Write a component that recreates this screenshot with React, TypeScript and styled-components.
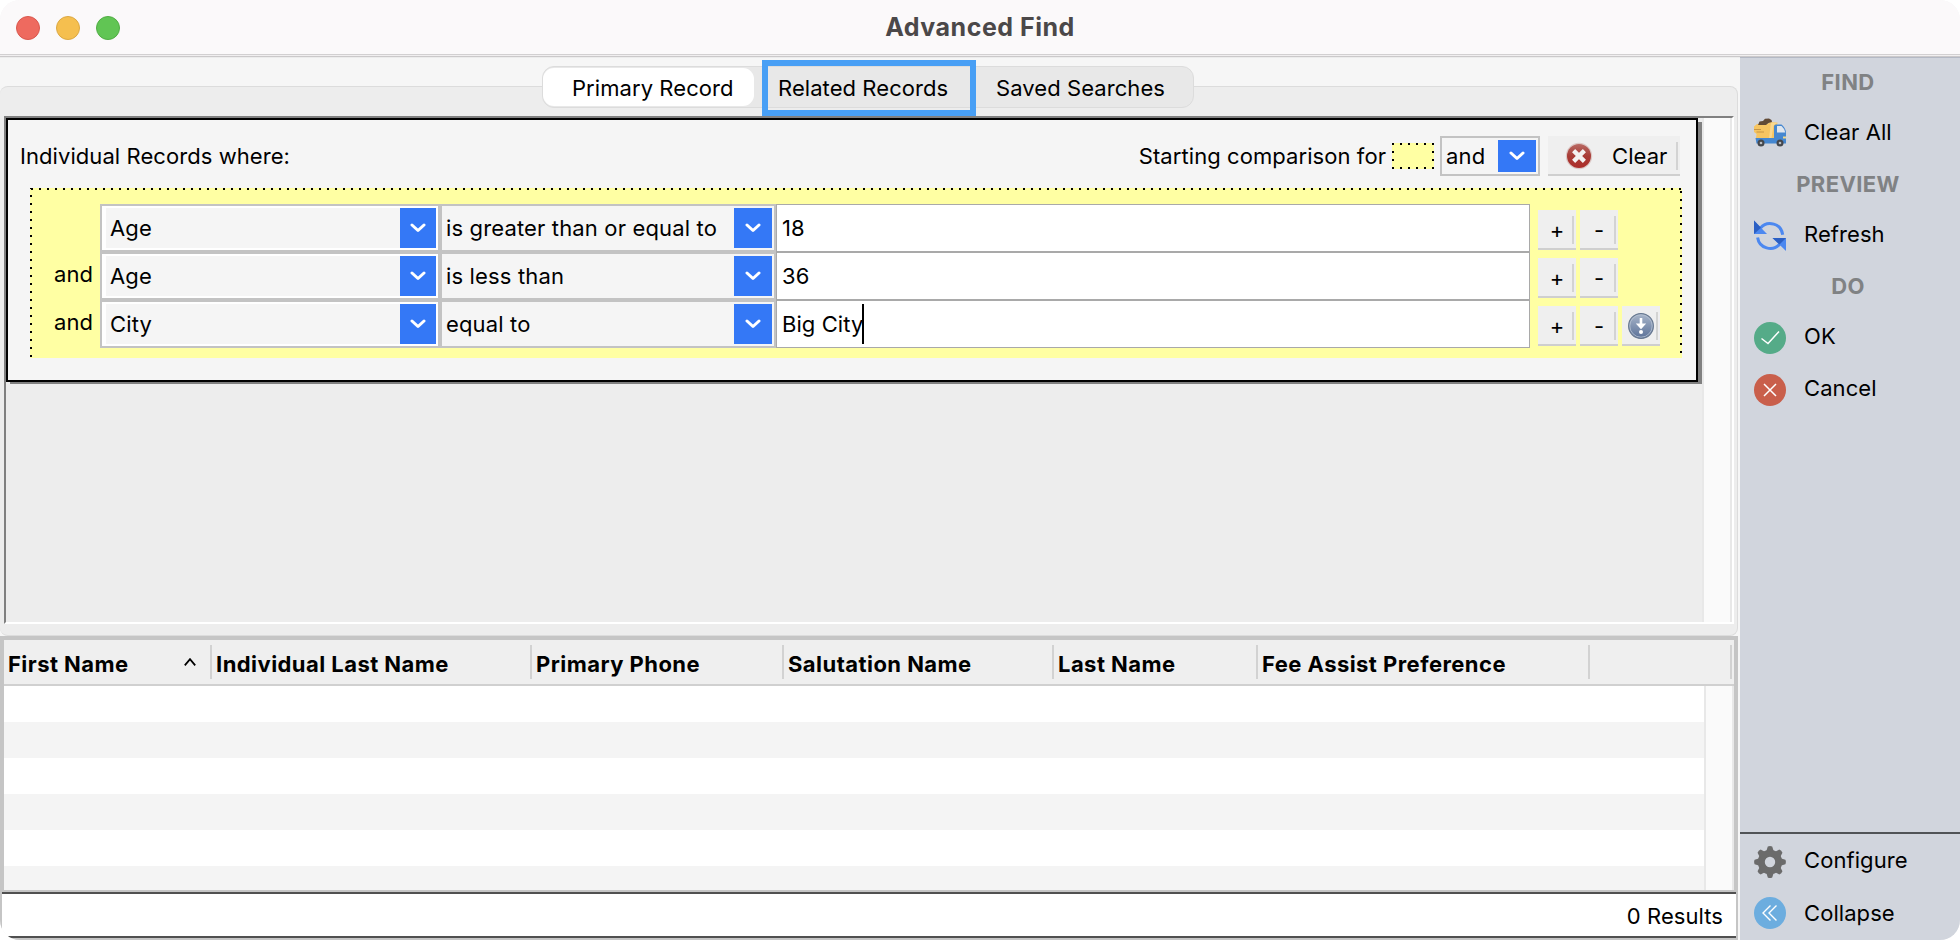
import React from "react";
import styled, { createGlobalStyle } from "styled-components";

const GlobalStyle = createGlobalStyle`
  * { box-sizing: border-box; }
  body {
    margin: 0;
    background: #fff;
    font-family: Inter, "Liberation Sans", sans-serif;
    font-size: 22px;
    line-height: 26px;
    letter-spacing: 0.07px;
    color: #000;
    white-space: nowrap;
  }
`;

const Window = styled.div`
  width: 1960px;
  height: 940px;
  display: flex;
  flex-direction: column;
  border-radius: 20px;
  overflow: hidden;
  background: #f6f6f6;
`;

const TitleBar = styled.header`
  height: 58px;
  flex: none;
  display: grid;
  grid-template-columns: 1fr auto 1fr;
  align-items: center;
  padding: 0 16px 4px;
  background: linear-gradient(#fbf9fa 54px, #d2d0d1 54px 55px, #f1eff0 55px 56px, #cbc9ca 56px 57px, #ececec 57px);
`;

const TrafficLights = styled.div`
  display: flex;
  gap: 16px;
  padding-top: 2px;
`;

const Light = styled.span<{ $fill: string; $edge: string }>`
  width: 24px;
  height: 24px;
  border-radius: 50%;
  border: 1px solid ${(p) => p.$edge};
  background: ${(p) => p.$fill};
`;

const Title = styled.h1`
  margin: 0;
  font-size: 25px;
  line-height: 30px;
  font-weight: 700;
  letter-spacing: 0.5px;
  color: #4b4849;
`;

const Body = styled.div`
  flex: 1;
  min-height: 0;
  display: flex;
  margin-top: -1px;
`;

const Main = styled.main`
  width: 1740px;
  flex: none;
  display: flex;
  flex-direction: column;
`;

const TabPanel = styled.section`
  width: 1738px;
  height: 550px;
  margin-top: 29px;
  padding: 0 3px 0 4px;
  border: 1px solid #dcdcdc;
  border-left-width: 0;
  border-radius: 8px;
  background: #ededed;
`;

const Tabs = styled.nav`
  position: relative;
  width: 652px;
  height: 42px;
  margin: -21px 0 8px 538px;
  display: flex;
  border: 1px solid #dcdcdc;
  border-radius: 12px;
  background: #e8e8e8;
`;

const Tab = styled.button<{ $width: number; $indent: number; $active?: boolean }>`
  width: ${(p) => p.$width}px;
  height: 38px;
  margin-top: 1px;
  padding: 2px 0 0 ${(p) => p.$indent}px;
  border: 0;
  border-radius: 11px;
  background: ${(p) => (p.$active ? "#fff" : "transparent")};
  font: inherit;
  letter-spacing: inherit;
  text-align: left;
  color: inherit;
`;

const FocusRing = styled.span`
  position: absolute;
  left: 219px;
  top: -7px;
  width: 214px;
  height: 56px;
  border: 6px solid #489ff5;
`;

const Viewport = styled.div`
  display: flex;
  width: 1730px;
  height: 508px;
  border-top: 2px solid #808080;
  border-left: 2px solid #808080;
  border-bottom: 2px solid #fff;
  border-right: 2px solid #fff;
`;

const Canvas = styled.div`
  width: 1696px;
  flex: none;
`;

const ScrollTrack = styled.div`
  flex: 1;
  border-left: 2px solid #e8e8e8;
  border-right: 2px solid #e8e8e8;
  background: #fafafa;
`;

const Criteria = styled.div`
  width: 1692px;
  height: 264px;
  border: 2px solid #000;
  background: #f5f5f5;
  box-shadow: 4px 2px 0 #808080;
  clip-path: polygon(0 0, 1692px 0, 1692px 4px, 1696px 4px, 1696px 266px, 4px 266px, 4px 264px, 0 264px);
`;

const CriteriaHeader = styled.div`
  height: 68px;
  display: flex;
  align-items: center;
  padding: 4px 16px 0 12px;
`;

const Spacer = styled.span`
  flex: 1;
`;

const Swatch = styled.span`
  width: 42px;
  height: 26px;
  margin: 0 6px 0 6px;
  background:
    linear-gradient(90deg, #000 2px, transparent 2px) 0 0 / 8px 2px repeat-x,
    linear-gradient(90deg, #000 2px, transparent 2px) 0 100% / 8px 2px repeat-x,
    linear-gradient(#000 2px, transparent 2px) 0 0 / 2px 8px repeat-y,
    linear-gradient(#000 2px, transparent 2px) 100% 0 / 2px 8px repeat-y,
    #ffffa3;
`;

const Select = styled.div<{ $width: number; $height: number; $indent: number; $inset?: boolean }>`
  width: ${(p) => p.$width}px;
  height: ${(p) => p.$height}px;
  flex: none;
  display: flex;
  align-items: center;
  justify-content: space-between;
  padding: 0 2px 0 ${(p) => p.$indent}px;
  border: 2px solid #c3c3c3;
  background: #f5f5f5;
  letter-spacing: 0.15px;
  box-shadow: ${(p) => (p.$inset ? "inset 0 0 0 2px #fff, inset 4px 0 0 #fff" : "none")};
`;

const Arrow = styled.span<{ $width: number; $height: number }>`
  width: ${(p) => p.$width}px;
  height: ${(p) => p.$height}px;
  display: flex;
  align-items: center;
  justify-content: center;
  padding-right: 1px;
  background: #3478f6;
`;

const PushButton = styled.button<{ $width: number }>`
  position: relative;
  width: ${(p) => p.$width}px;
  height: 40px;
  display: flex;
  align-items: center;
  justify-content: center;
  padding: 2px 0 0;
  border: 0;
  border-bottom: 2px solid #cfcfcf;
  background: #efefef;
  font: inherit;
  letter-spacing: inherit;
  color: inherit;
  &::after {
    content: "";
    position: absolute;
    right: 2px;
    top: 6px;
    width: 2px;
    height: 28px;
    background: #d3d3d3;
  }
`;

const ClearButton = styled(PushButton)`
  margin-left: 8px;
  justify-content: flex-start;
  gap: 19px;
  padding: 2px 0 0 17px;
`;

const Group = styled.div`
  width: 1652px;
  height: 170px;
  margin-left: 22px;
  padding-top: 16px;
  background:
    linear-gradient(90deg, #000 2px, transparent 2px) 1px 0 / 8px 2px repeat-x,
    linear-gradient(#000 2px, transparent 2px) 0 7px / 2px 8px repeat-y,
    linear-gradient(#000 2px, transparent 2px) 100% 3px / 2px 8px repeat-y,
    #ffffa3;
`;

const Rule = styled.div`
  height: 48px;
  display: flex;
`;

const Joiner = styled.span`
  width: 70px;
  padding: 9px 7px 0 0;
  text-align: right;
`;

const ValueField = styled.div`
  width: 754px;
  height: 48px;
  display: flex;
  align-items: center;
  padding: 0 0 0 5px;
  border: 1px solid #a9a9a9;
  background: #fff;
`;

const Caret = styled.span`
  width: 2px;
  height: 40px;
  margin-left: -1px;
  background: #000;
`;

const RuleActions = styled.div`
  display: flex;
  gap: 4px;
  padding: 6px 0 0 8px;
`;

const Results = styled.section`
  width: 1738px;
  height: 256px;
  border: 4px solid #c5c5c5;
  border-bottom-width: 2px;
`;

const Columns = styled.div`
  height: 46px;
  display: flex;
  align-items: center;
  border-bottom: 2px solid #d0d0d0;
  background: #efefef;
`;

const Column = styled.div<{ $width: number }>`
  width: ${(p) => p.$width}px;
  height: 34px;
  display: flex;
  align-items: center;
  justify-content: space-between;
  padding: 4px 14px 0 4px;
  border-right: 2px solid #d2d2d2;
  font-weight: 700;
  letter-spacing: 0.45px;
  & > svg { margin-bottom: 4px; }
`;

const Grid = styled.div`
  height: 204px;
  display: flex;
`;

const Rows = styled.div`
  width: 1700px;
  background: repeating-linear-gradient(#fff 0 36px, #f4f4f4 36px 72px);
`;

const Footer = styled.footer`
  height: 48px;
  display: flex;
  align-items: center;
  justify-content: flex-end;
  width: 1738px;
  padding: 2px 13px 0 0;
  border-left: 2px solid #c5c5c5;
  border-right: 2px solid #c5c5c5;
  border-bottom: 2px solid #c5c5c5;
  background: linear-gradient(#505050 2px, #fff 2px calc(100% - 2px), #505050 calc(100% - 2px));
`;

const Sidebar = styled.aside`
  flex: 1;
  display: flex;
  flex-direction: column;
  border-top: 1px solid #b4b9c4;
  background: #d1d5dd;
`;

const Heading = styled.h2`
  height: 50px;
  margin: 0;
  padding-right: 4px;
  font-size: 22px;
  line-height: 49px;
  font-weight: 700;
  letter-spacing: 0.4px;
  text-align: center;
  color: #808284;
`;

const Action = styled.button<{ $shift?: number }>`
  height: 52px;
  display: flex;
  align-items: center;
  gap: 18px;
  padding: 0 0 4px 14px;
  border: 0;
  background: none;
  font: inherit;
  letter-spacing: inherit;
  color: inherit;
  & > svg { margin-top: ${(p) => p.$shift ?? 4}px; flex: none; }
`;

const SidebarFooter = styled.div`
  display: flex;
  flex-direction: column;
  margin-top: auto;
  height: 108px;
  padding-top: 2px;
  border-top: 2px solid #505356;
  gap: 2px;
`;

const Chevron = () => (
  <svg width="16" height="10" viewBox="0 0 16 10" fill="none">
    <path d="M2 2l6 5.5L14 2" stroke="#fff" strokeWidth="3" strokeLinecap="round" strokeLinejoin="round" />
  </svg>
);

const SortUp = () => (
  <svg width="12" height="8" viewBox="0 0 12 8" fill="none">
    <path d="M0.8 7.4L6 1.2l5.2 6.2" stroke="#000" strokeWidth="1.8" />
  </svg>
);

const ClearIcon = () => (
  <svg width="28" height="28" viewBox="0 0 28 28">
    <defs>
      <linearGradient id="clearRed" x1="0" y1="0" x2="0" y2="1">
        <stop offset="0" stopColor="#b96a64" />
        <stop offset="0.5" stopColor="#a83c36" />
        <stop offset="1" stopColor="#ad2c29" />
      </linearGradient>
    </defs>
    <circle cx="14" cy="14" r="13.2" fill="#dcc9c7" />
    <circle cx="14" cy="14" r="12" fill="url(#clearRed)" />
    <path d="M8.6 8.6l10.8 10.8M19.4 8.6L8.600 19.400" stroke="#f4f1f0" strokeWidth="4.4" />
  </svg>
);

const DownIcon = () => (
  <svg width="26" height="26" viewBox="0 0 26 26">
    <defs>
      <linearGradient id="downBlue" x1="0" y1="0" x2="0" y2="1">
        <stop offset="0" stopColor="#a9b6ca" />
        <stop offset="1" stopColor="#5b7198" />
      </linearGradient>
    </defs>
    <circle cx="13" cy="13" r="12.4" fill="url(#downBlue)" stroke="#66778f" strokeWidth="1.1" />
    <circle cx="13" cy="13" r="11.2" fill="none" stroke="#b6c1d2" strokeWidth="0.8" />
    <path d="M11.7 5h2.6v5.6h3.9L13 16.3 7.8 10.6h3.9z" fill="#fff" />
    <circle cx="13" cy="19" r="2" fill="#fff" />
  </svg>
);

const TruckIcon = () => (
  <svg width="32" height="32" viewBox="0 0 32 32">
    <path d="M3 6h10l4-2 6.5.8L20 20H2l.6-4L0 14V8.5z" fill="#f6c562" />
    <path d="M17 4.500l6.5.3-4 3L17.500 20H15z" fill="#f9d78e" />
    <path d="M4 7l1.500-3.500L9 3 11 .8 15 .4l2.500 1.600L18 4l-3.500 1L12 7z" fill="#614a35" />
    <path d="M0 11.500h7M2.500 14h7.500" stroke="#c89645" strokeWidth="1" />
    <path d="M1.500 20H20V8.500Q20 6.500 22 6.500h5.500Q31 9 32 14v11.500H2.500z" fill="#4587d0" />
    <path d="M23 8h4.500q3 2.500 3.800 6.500H23z" fill="#dfe6ee" />
    <path d="M29 18.500h3v2h-3z" fill="#f2d98a" />
    <circle cx="7" cy="25" r="3.500" fill="#44474c" />
    <circle cx="26" cy="25" r="3.500" fill="#44474c" />
    <circle cx="7" cy="25" r="1.300" fill="#b9bcc1" />
    <circle cx="26" cy="25" r="1.300" fill="#b9bcc1" />
  </svg>
);

const RefreshIcon = () => (
  <svg width="32" height="32" viewBox="0 0 32 32" fill="none">
    <path d="M6.500 8A12.700 12.700 0 0 1 28.700 14.700" stroke="#4c88f0" strokeWidth="3" />
    <path d="M3.600 17.500A12.700 12.700 0 0 0 25.800 24" stroke="#4c88f0" strokeWidth="3" />
    <path d="M0 .5L13 14H0z" fill="#4c88f0" />
    <path d="M0 .5L7 7.800 0 14z" fill="#2b5fc4" />
    <path d="M18.500 18H32v13z" fill="#4c88f0" />
    <path d="M18.500 18H32l-6.500 6.500z" fill="#2b5fc4" />
  </svg>
);

const OkIcon = () => (
  <svg width="32" height="32" viewBox="0 0 32 32" fill="none">
    <circle cx="16" cy="16" r="16" fill="#55ab88" />
    <path d="M7.500 16.500l6.500 5L25 9.500" stroke="#fff" strokeWidth="1.500" />
  </svg>
);

const CancelIcon = () => (
  <svg width="32" height="32" viewBox="0 0 32 32" fill="none">
    <circle cx="16" cy="16" r="16" fill="#c95f4b" />
    <path d="M10 10l12 12M22 10L10 22" stroke="#fff" strokeWidth="1.500" />
  </svg>
);

const GearIcon = () => (
  <svg width="32" height="32" viewBox="0 0 32 32" fill="none">
    <circle cx="16" cy="16" r="8.700" stroke="#6b6b6b" strokeWidth="7" />
    {[0, 45, 90, 135, 180, 225, 270, 315].map((a) => (
      <path key={a} d="M12.200 5.500L13.800.6Q16-.4 18.200.6L19.800 5.500z" fill="#6b6b6b" transform={`rotate(${a} 16 16)`} />
    ))}
  </svg>
);

const CollapseIcon = () => (
  <svg width="32" height="32" viewBox="0 0 32 32" fill="none">
    <circle cx="16" cy="16" r="16" fill="#6caddf" />
    <path d="M16.500 8.500L9 16l7.500 7.500M22.500 8.500L15 16l7.500 7.500" stroke="#fff" strokeWidth="1.400" />
  </svg>
);

const rules = [
  { joiner: "", field: "Age", operator: "is greater than or equal to", value: "18" },
  { joiner: "and", field: "Age", operator: "is less than", value: "36" },
  { joiner: "and", field: "City", operator: "equal to", value: "Big City" },
];

const columns = [
  { label: "First Name", width: 208 },
  { label: "Individual Last Name", width: 320 },
  { label: "Primary Phone", width: 252 },
  { label: "Salutation Name", width: 270 },
  { label: "Last Name", width: 204 },
  { label: "Fee Assist Preference", width: 332 },
  { label: "", width: 142 },
];

export default function App() {
  return (
    <Window>
      <GlobalStyle />
      <TitleBar>
        <TrafficLights>
          <Light $fill="#ee6a5f" $edge="#d9584e" />
          <Light $fill="#f5bf4f" $edge="#dba843" />
          <Light $fill="#61c554" $edge="#51ad44" />
        </TrafficLights>
        <Title>Advanced Find</Title>
      </TitleBar>
      <Body>
        <Main>
          <TabPanel>
            <Tabs>
              <Tab $width={211} $indent={29} $active>Primary Record</Tab>
              <Tab $width={220} $indent={24}>Related Records</Tab>
              <Tab $width={216} $indent={22}>Saved Searches</Tab>
              <FocusRing />
            </Tabs>
            <Viewport>
              <Canvas>
                <Criteria>
                  <CriteriaHeader>
                    <span>Individual Records where:</span>
                    <Spacer />
                    <span>Starting comparison for</span>
                    <Swatch />
                    <Select $width={100} $height={40} $indent={4}>
                      and
                      <Arrow $width={38} $height={32}><Chevron /></Arrow>
                    </Select>
                    <ClearButton $width={132}>
                      <ClearIcon />
                      Clear
                    </ClearButton>
                  </CriteriaHeader>
                  <Group>
                    {rules.map((rule, i) => {
                      const last = i === rules.length - 1;
                      return (
                        <Rule key={i}>
                          <Joiner>{rule.joiner}</Joiner>
                          <Select $width={340} $height={48} $indent={8} $inset>
                            {rule.field}
                            <Arrow $width={36} $height={40}><Chevron /></Arrow>
                          </Select>
                          <Select $width={336} $height={48} $indent={4}>
                            {rule.operator}
                            <Arrow $width={38} $height={40}><Chevron /></Arrow>
                          </Select>
                          <ValueField>
                            {rule.value}
                            {last && <Caret />}
                          </ValueField>
                          <RuleActions>
                            <PushButton $width={38}>+</PushButton>
                            <PushButton $width={38}>-</PushButton>
                            {last && <PushButton $width={38}><DownIcon /></PushButton>}
                          </RuleActions>
                        </Rule>
                      );
                    })}
                  </Group>
                </Criteria>
              </Canvas>
              <ScrollTrack />
            </Viewport>
          </TabPanel>
          <Results>
            <Columns>
              {columns.map((column, i) => (
                <Column key={i} $width={column.width}>
                  {column.label}
                  {i === 0 && <SortUp />}
                </Column>
              ))}
            </Columns>
            <Grid>
              <Rows />
              <ScrollTrack />
            </Grid>
          </Results>
          <Footer>0 Results</Footer>
        </Main>
        <Sidebar>
          <Heading>FIND</Heading>
          <Action><TruckIcon />Clear All</Action>
          <Heading>PREVIEW</Heading>
          <Action><RefreshIcon />Refresh</Action>
          <Heading>DO</Heading>
          <Action><OkIcon />OK</Action>
          <Action><CancelIcon />Cancel</Action>
          <SidebarFooter>
            <Action><GearIcon />Configure</Action>
            <Action $shift={0}><CollapseIcon />Collapse</Action>
          </SidebarFooter>
        </Sidebar>
      </Body>
    </Window>
  );
}
